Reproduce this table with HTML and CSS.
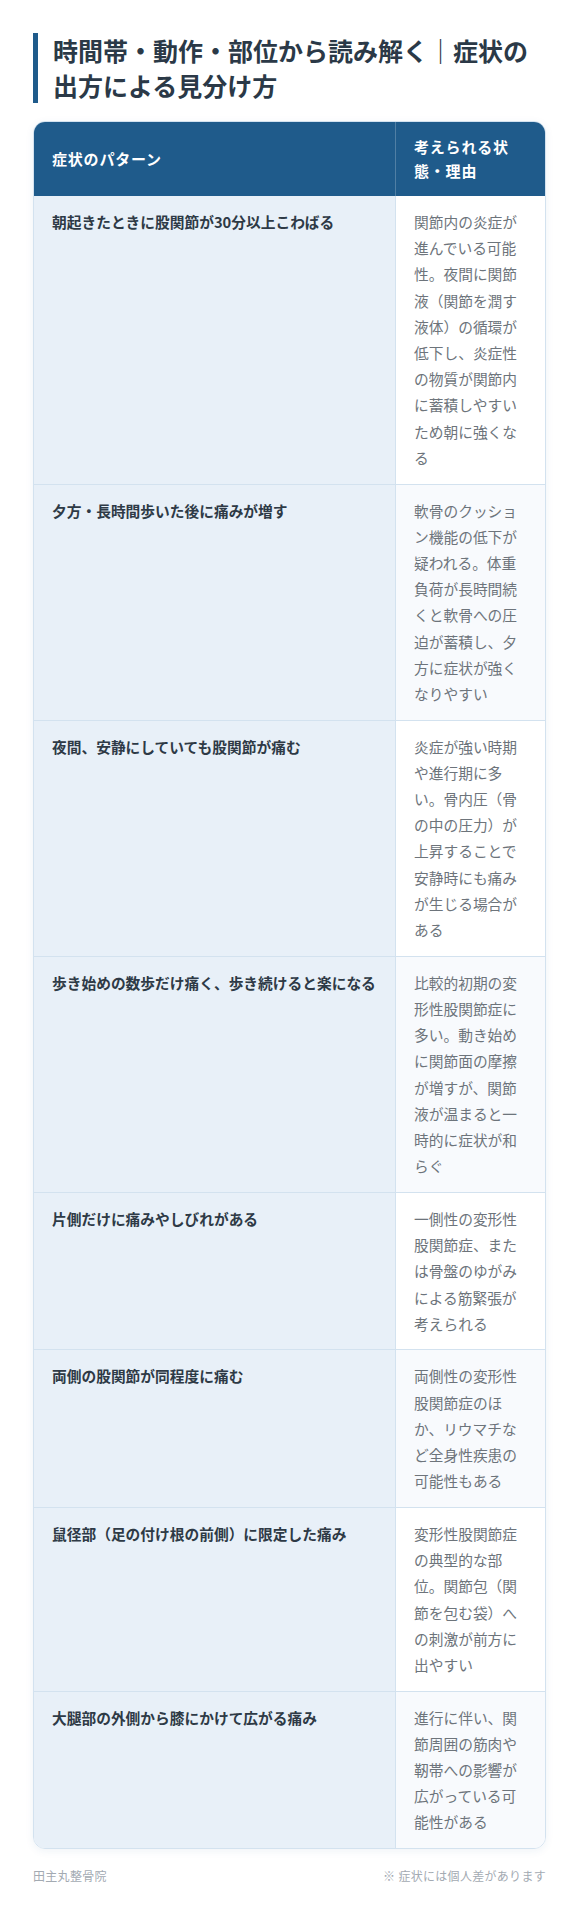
FILE: index.html
```html
<!DOCTYPE html>
<html lang="ja">
<head>
<meta charset="utf-8">
<title>症状の出方による見分け方</title>
<link rel="stylesheet" href="styles.css">
</head>
<body>
<main class="page">
  <h1 class="title">時間帯・動作・部位から読み解く｜症状の出方による見分け方</h1>
  <div class="table">
    <div class="th th-pattern">症状のパターン</div>
    <div class="th th-reason">考えられる状態・理由</div>

    <div class="td pattern">朝起きたときに股関節が30分以上こわばる</div>
    <div class="td reason">関節内の炎症が進んでいる可能性。夜間に関節液（関節を潤す液体）の循環が低下し、炎症性の物質が関節内に蓄積しやすいため朝に強くなる</div>

    <div class="td pattern">夕方・長時間歩いた後に痛みが増す</div>
    <div class="td reason even">軟骨のクッション機能の低下が疑われる。体重負荷が長時間続くと軟骨への圧迫が蓄積し、夕方に症状が強くなりやすい</div>

    <div class="td pattern">夜間、安静にしていても股関節が痛む</div>
    <div class="td reason">炎症が強い時期や進行期に多い。骨内圧（骨の中の圧力）が上昇することで安静時にも痛みが生じる場合がある</div>

    <div class="td pattern">歩き始めの数歩だけ痛く、歩き続けると楽になる</div>
    <div class="td reason even">比較的初期の変形性股関節症に多い。動き始めに関節面の摩擦が増すが、関節液が温まると一時的に症状が和らぐ</div>

    <div class="td pattern">片側だけに痛みやしびれがある</div>
    <div class="td reason">一側性の変形性股関節症、または骨盤のゆがみによる筋緊張が考えられる</div>

    <div class="td pattern">両側の股関節が同程度に痛む</div>
    <div class="td reason even">両側性の変形性股関節症のほか、リウマチなど全身性疾患の可能性もある</div>

    <div class="td pattern">鼠径部（足の付け根の前側）に限定した痛み</div>
    <div class="td reason">変形性股関節症の典型的な部位。関節包（関節を包む袋）への刺激が前方に出やすい</div>

    <div class="td pattern last">大腿部の外側から膝にかけて広がる痛み</div>
    <div class="td reason even last">進行に伴い、関節周囲の筋肉や靭帯への影響が広がっている可能性がある</div>
  </div>
  <footer class="footer">
    <span class="brand">田主丸整骨院</span>
    <span class="note">※ 症状には個人差があります</span>
  </footer>
</main>
</body>
</html>
```
FILE: styles.css
```css
* {
  box-sizing: border-box;
}

html, body {
  margin: 0;
  padding: 0;
  background: #ffffff;
}

body {
  font-family: "Noto Sans CJK JP", "Noto Sans", "Liberation Sans", sans-serif;
  color: #2e3a46;
}

.page {
  padding: 33px 34px 40px 33px;
}

.title {
  margin: 0 0 18px 0;
  padding-left: 15px;
  border-left: 5px solid #1f5b8b;
  font-size: 25px;
  line-height: 35px;
  font-weight: 700;
  color: #2b3947;
}

.table {
  display: grid;
  grid-template-columns: 362px 1fr;
  border: 1px solid #d3e2ef;
  border-radius: 12px;
  overflow: hidden;
  box-shadow: 0 2px 8px rgba(31, 91, 139, 0.07);
}

.th {
  background: #1f5b8b;
  color: #ffffff;
  font-size: 15px;
  line-height: 24px;
  font-weight: 700;
  letter-spacing: 0.8px;
  padding: 13px 18px;
  display: flex;
  align-items: center;
}

.th-pattern {
  border-right: 1px solid rgba(255, 255, 255, 0.22);
}

.th-reason {
  padding-right: 25px;
}

.td {
  font-size: 14.72px;
  line-height: 26.2px;
  padding: 13px 18px 12.5px 18px;
  border-bottom: 1px solid #d3e2ef;
}

.td.last {
  border-bottom: none;
}

.pattern {
  background: #e8f0f8;
  font-weight: 700;
  color: #2e3a46;
  border-right: 1px solid #d3e2ef;
  padding-right: 12px;
}

.reason {
  background: #ffffff;
  color: #6d747b;
  padding-right: 25px;
}

.reason.even {
  background: #f8fafd;
}

.footer {
  display: flex;
  justify-content: space-between;
  align-items: center;
  margin-top: 18px;
  font-size: 12px;
  line-height: 18px;
  letter-spacing: 0.3px;
  color: #a3aab2;
}
```
